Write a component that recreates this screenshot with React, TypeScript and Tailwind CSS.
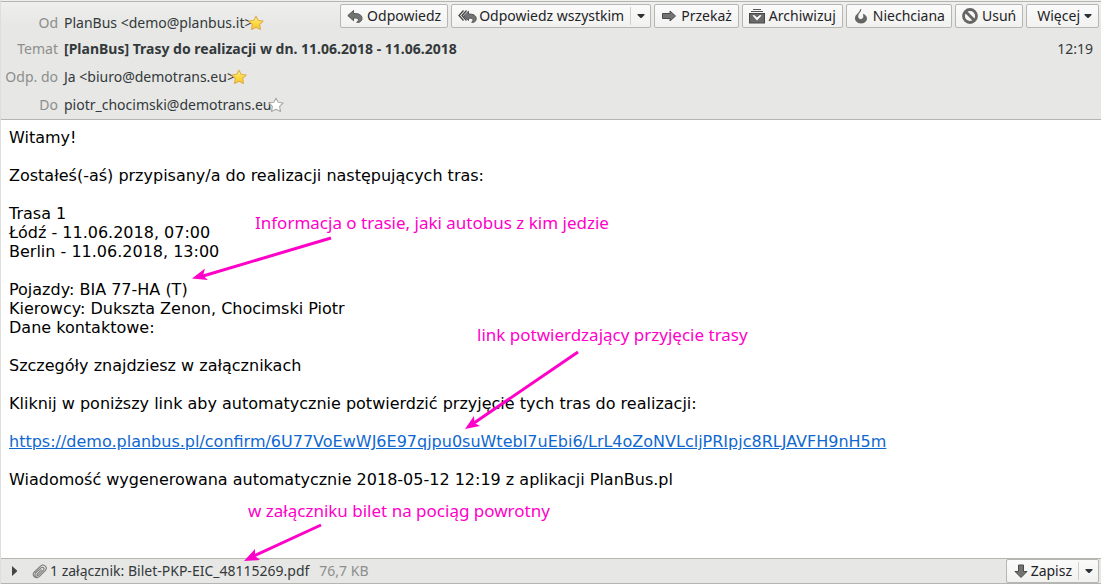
import type { ReactNode } from "react";

const UI = "font-['Noto_Sans','Open_Sans',sans-serif]";

function Caret() {
  return (
    <svg width="8" height="5" viewBox="0 0 8 5" aria-hidden="true" className="shrink-0">
      <path d="M0.500 0h7v1L4.500 4h-1L0.500 1z" fill="#2b3338" />
    </svg>
  );
}

function Star({ filled }: { filled: boolean }) {
  return (
    <svg width="16" height="16" viewBox="0 0 16 16" aria-hidden="true" className="shrink-0">
      <defs>
        <linearGradient id="gold" x1="0" y1="0" x2="0" y2="1">
          <stop offset="0" stopColor="#fff3a0" />
          <stop offset="0.55" stopColor="#fcd93c" />
          <stop offset="1" stopColor="#f7c42c" />
        </linearGradient>
      </defs>
      <path
        d="M8 1.200l2.200 4 4.900.8-3.500 3.400.9 5L8 12.300l-4.500 2.100.9-5L.9 6l4.900-.8z"
        fill={filled ? "url(#gold)" : "#ffffff"}
        stroke={filled ? "#dfb04e" : "#a9a9a9"}
        strokeWidth="1.100"
        strokeLinejoin="round"
      />
    </svg>
  );
}

function Icon({ children }: { children: ReactNode }) {
  return (
    <svg width="16" height="16" viewBox="0 0 16 16" aria-hidden="true" className="shrink-0">
      {children}
    </svg>
  );
}

const ReplyIcon = () => (
  <Icon>
    <path
      d="M6.500 2.500v3c5.500-.2 8.500 1.500 8.500 5 0 1.800-1 3-2.800 3.800H9.700c1.700-1.200 2-2.200 1.500-3.100-.6-1-2.200-1.300-4.700-1.200v2.700L.8 7.600z"
      fill="#737373"
      stroke="#555555"
      strokeWidth="1"
      strokeLinejoin="round"
    />
  </Icon>
);

const ReplyAllIcon = () => (
  <svg width="19" height="16" viewBox="0 0 19 16" aria-hidden="true" className="shrink-0">
    <path d="M5.500 2.500L1 7.500l4.500 5" fill="none" stroke="#3f3f3f" strokeWidth="1.300" />
    <path d="M8.500 2.500L4 7.500l4.500 5" fill="none" stroke="#3f3f3f" strokeWidth="1.300" />
    <path
      d="M10.500 3.200v2.800c4.800 0 7.700 1.400 7.700 4.700 0 1.700-.9 2.800-2.400 3.600h-2.200c1.400-1.200 1.700-2.100 1.200-3-.5-.9-1.900-1.200-4.300-1.100v2.300L5.800 7.700z"
      fill="#737373"
      stroke="#555555"
      strokeWidth="1"
      strokeLinejoin="round"
    />
  </svg>
);

const ForwardIcon = () => (
  <Icon>
    <path
      d="M1.500 5.500h7.500V3L14.500 8 9 13v-2.500H1.500z"
      fill="#737373"
      stroke="#4a4a4a"
      strokeLinejoin="round"
    />
  </Icon>
);

const ArchiveIcon = () => (
  <Icon>
    <path d="M4 1.500h8M2 3.500h12" stroke="#555555" strokeWidth="1" />
    <rect x="0.500" y="5.500" width="15" height="9.500" fill="#6a6a6a" stroke="#484848" />
    <path d="M3.500 7.500L8 12.500l4.500-5-1.500-.6-3 2.600-3-2.600z" fill="#ffffff" />
  </Icon>
);

const JunkIcon = () => (
  <Icon>
    <path
      d="M7.800 1.200C8.200 4 4.800 5 4.800 8.300c0 1.900 1.300 3.200 3 3.200 2.400 0 3.500-2.300 2.600-5.200 2.100 1 3.400 2.500 3.200 4.600-.3 2.500-2.600 4.200-5.600 4.200-3.200 0-5.700-2-5.700-5C2.300 6.400 6.800 5.400 7.800 1.200z"
      fill="#666666"
      stroke="#555555"
      strokeWidth="0.700"
    />
  </Icon>
);

const DeleteIcon = () => (
  <Icon>
    <circle cx="8" cy="8" r="6.500" fill="none" stroke="#666666" strokeWidth="2.800" />
    <path d="M3.600 3.600l8.800 8.800" stroke="#666666" strokeWidth="2.800" />
  </Icon>
);

const SaveIcon = () => (
  <Icon>
    <path
      d="M5.500 2v6.500H2L8 14.500l6-6h-3.500V2z"
      fill="#737373"
      stroke="#4a4a4a"
      strokeLinejoin="round"
    />
  </Icon>
);

const ClipIcon = () => (
  <Icon>
    <g fill="none" stroke="#7a7a7a" strokeWidth="1.100" strokeLinecap="round">
      <path d="M2 9.500L8.500 3.200c3-2.800 7.600.6 4.900 4.200l-5.900 6c-2.400 2.200-5.900-.4-4-3.200l5.500-5.400c1.800-1.500 4 .5 2.500 2.400l-5 5c-1 .8-2.100-.2-1.300-1.200l4.200-4.200" />
      <path d="M1.500 10c-1 2.500 1 5 3.700 4.600" />
    </g>
  </Icon>
);

const frame = "h-6 rounded-xs border border-[#b6b6b3] bg-linear-to-b from-[#fbfbfb] to-[#f1f1f0] text-[#1f2426]";

function ToolButton({ icon, label }: { icon: ReactNode; label: string }) {
  return (
    <button type="button" className={`${frame} flex items-center gap-1 px-1.5`}>
      {icon}
      {label}
    </button>
  );
}

function SplitButton({ icon, label, menu }: { icon: ReactNode; label: string; menu: string }) {
  return (
    <div className={`${frame} flex items-center`}>
      <button type="button" className="flex h-full items-center gap-0.5 pr-1.5 pl-1.5">
        {icon}
        {label}
      </button>
      <button
        type="button"
        aria-label={menu}
        className="flex h-4.5 w-5 items-center justify-center border-l border-[#cfcfcd]"
      >
        <Caret />
      </button>
    </div>
  );
}

function Address({ text, starred }: { text: string; starred: boolean }) {
  return (
    <span className="flex items-center">
      {text}
      <button type="button" aria-label="Kontakt" className="-ml-1">
        <Star filled={starred} />
      </button>
    </span>
  );
}

const label = "w-[57px] shrink-0 text-right text-[#8c8e8c]";
const row = "flex h-7 items-center gap-1.5";

function Header() {
  return (
    <header className="border-y border-[#b4b4b1] bg-linear-to-b from-[#efefee] to-[#e7e7e5] to-20%">
      <div className="flex items-start justify-between pt-0.5">
        <div className={`${row} mt-[5px]`}>
          <span className={label}>Od</span>
          <Address text="PlanBus <demo@planbus.it>" starred />
        </div>
        <div role="toolbar" className="flex gap-[3px] pr-0.5">
          <ToolButton icon={<ReplyIcon />} label="Odpowiedz" />
          <SplitButton icon={<ReplyAllIcon />} label="Odpowiedz wszystkim" menu="Opcje odpowiedzi" />
          <ToolButton icon={<ForwardIcon />} label="Przekaż" />
          <ToolButton icon={<ArchiveIcon />} label="Archiwizuj" />
          <ToolButton icon={<JunkIcon />} label="Niechciana" />
          <ToolButton icon={<DeleteIcon />} label="Usuń" />
          <button type="button" className={`${frame} flex items-center gap-1 pr-1.5 pl-2.5`}>
            Więcej
            <Caret />
          </button>
        </div>
      </div>
      <div className="flex h-6 items-center gap-1.5 pr-2">
        <span className={label}>Temat</span>
        <h1 className="flex-1 font-bold">[PlanBus] Trasy do realizacji w dn. 11.06.2018 - 11.06.2018</h1>
        <time>12:19</time>
      </div>
      <div className="pt-0.5">
        <div className={row}>
          <span className={label}>Odp. do</span>
          <Address text="Ja <biuro@demotrans.eu>" starred />
        </div>
        <div className={row}>
          <span className={label}>Do</span>
          <Address text="piotr_chocimski@demotrans.eu" starred={false} />
        </div>
      </div>
    </header>
  );
}

function Notes() {
  const note = `absolute whitespace-nowrap ${UI} text-[17px] leading-6 text-[#ff00c8]`;
  return (
    <>
      <p className={`${note} top-[211px] left-[254px]`}>Informacja o trasie, jaki autobus z kim jedzie</p>
      <p className={`${note} top-[323px] left-[476px]`}>link potwierdzający przyjęcie trasy</p>
      <p className={`${note} top-[499px] left-[247px]`}>w załączniku bilet na pociąg powrotny</p>
      <svg
        width="600"
        height="584"
        viewBox="1 0 600 584"
        aria-hidden="true"
        className="pointer-events-none absolute top-0 left-0"
      >
        <g stroke="#ff00c8" strokeWidth="3" fill="#ff00c8">
          <path d="M331 238L203 276" />
          <path d="M578 352L474 423" />
          <path d="M321 525L254 556" />
        </g>
        <g fill="#ff00c8">
          <path d="M192 278.500L205 268.500L203 275.500L208 280z" />
          <path d="M465 429L474 416L474.500 423L480 426z" />
          <path d="M244 561L255 549L255 556L260 560z" />
        </g>
      </svg>
    </>
  );
}

function Message() {
  return (
    <main className="flex-1 bg-white px-2 pt-2 font-['DejaVu_Sans',sans-serif] text-base leading-[19px] text-black">
      <div className="space-y-[19px]">
        <p>Witamy!</p>
        <p>Zostałeś(-aś) przypisany/a do realizacji następujących tras:</p>
        <p>
          Trasa 1<br />
          Łódź - 11.06.2018, 07:00
          <br />
          Berlin - 11.06.2018, 13:00
        </p>
        <p>
          Pojazdy: BIA 77-HA (T)
          <br />
          Kierowcy: Dukszta Zenon, Chocimski Piotr
          <br />
          Dane kontaktowe:
        </p>
        <p>Szczegóły znajdziesz w załącznikach</p>
        <p>Kliknij w poniższy link aby automatycznie potwierdzić przyjęcie tych tras do realizacji:</p>
        <p>
          <a
            href="https://demo.planbus.pl/confirm/6U77VoEwWJ6E97qjpu0suWtebI7uEbi6/LrL4oZoNVLcljPRIpjc8RLJAVFH9nH5m"
            className="text-[#0f68d0] underline"
          >
            https://demo.planbus.pl/confirm/6U77VoEwWJ6E97qjpu0suWtebI7uEbi6/LrL4oZoNVLcljPRIpjc8RLJAVFH9nH5m
          </a>
        </p>
        <p>Wiadomość wygenerowana automatycznie 2018-05-12 12:19 z aplikacji PlanBus.pl</p>
      </div>
    </main>
  );
}

function Attachments() {
  return (
    <footer className="flex h-[26px] items-center border-y border-[#b4b4b1] bg-[#e7e7e5] pr-0.5 pl-2.5">
      <button type="button" aria-label="Pokaż załączniki" className="mr-3.5">
        <svg width="7" height="10" viewBox="0 0 7 10" aria-hidden="true">
          <path d="M1 0l5 4.500v1L1 10z" fill="#454545" />
        </svg>
      </button>
      <ClipIcon />
      <span className="ml-0.5">1 załącznik: Bilet-PKP-EIC_48115269.pdf</span>
      <span className="ml-2.5 flex-1 text-[#8c8e8c]">76,7 KB</span>
      <SplitButton icon={<SaveIcon />} label="Zapisz" menu="Opcje zapisu" />
    </footer>
  );
}

export default function App() {
  return (
    <div
      className={`relative flex min-h-screen flex-col border-l border-[#dededc] bg-[#efefee] pt-px ${UI} text-sm leading-5 text-[#33393b]`}
    >
      <Header />
      <Message />
      <Attachments />
      <Notes />
    </div>
  );
}
